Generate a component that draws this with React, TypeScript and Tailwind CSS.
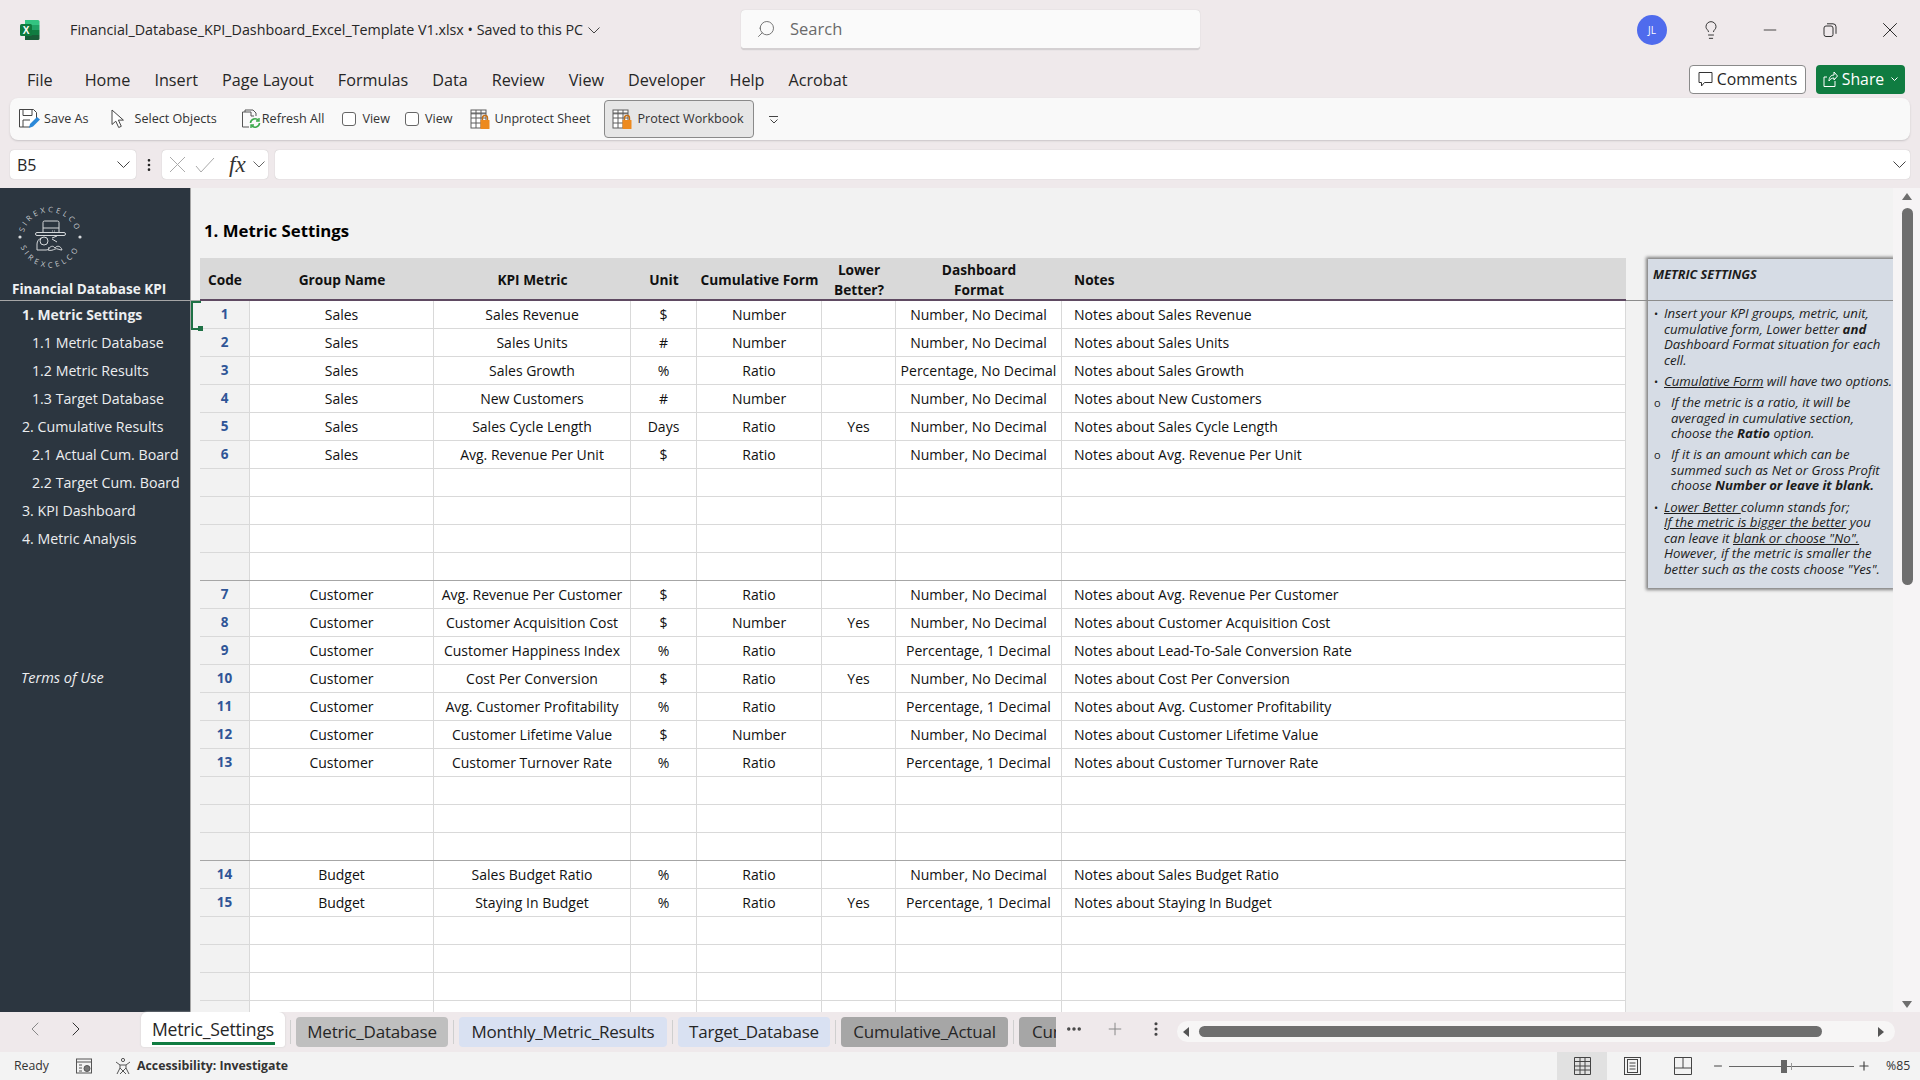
import { ChevronLeft, ChevronRight, Lightbulb, Minus, MoreHorizontal, MoreVertical, Plus, Search, X } from "lucide-react";
import type { ReactNode } from "react";

type Row = { code?: number; group?: string; metric?: string; unit?: string; form?: string; lower?: string; format?: string; notes?: string; thick?: boolean };

const NUM = "Number, No Decimal";
const PCT0 = "Percentage, No Decimal";
const PCT1 = "Percentage, 1 Decimal";

const rows: Row[] = [
	{ code: 1, group: "Sales", metric: "Sales Revenue", unit: "$", form: "Number", format: NUM, notes: "Notes about Sales Revenue" },
	{ code: 2, group: "Sales", metric: "Sales Units", unit: "#", form: "Number", format: NUM, notes: "Notes about Sales Units" },
	{ code: 3, group: "Sales", metric: "Sales Growth", unit: "%", form: "Ratio", format: PCT0, notes: "Notes about Sales Growth" },
	{ code: 4, group: "Sales", metric: "New Customers", unit: "#", form: "Number", format: NUM, notes: "Notes about New Customers" },
	{ code: 5, group: "Sales", metric: "Sales Cycle Length", unit: "Days", form: "Ratio", lower: "Yes", format: NUM, notes: "Notes about Sales Cycle Length" },
	{ code: 6, group: "Sales", metric: "Avg. Revenue Per Unit", unit: "$", form: "Ratio", format: NUM, notes: "Notes about Avg. Revenue Per Unit" },
	{},
	{},
	{},
	{ thick: true },
	{ code: 7, group: "Customer", metric: "Avg. Revenue Per Customer", unit: "$", form: "Ratio", format: NUM, notes: "Notes about Avg. Revenue Per Customer" },
	{ code: 8, group: "Customer", metric: "Customer Acquisition Cost", unit: "$", form: "Number", lower: "Yes", format: NUM, notes: "Notes about Customer Acquisition Cost" },
	{ code: 9, group: "Customer", metric: "Customer Happiness Index", unit: "%", form: "Ratio", format: PCT1, notes: "Notes about Lead-To-Sale Conversion Rate" },
	{ code: 10, group: "Customer", metric: "Cost Per Conversion", unit: "$", form: "Ratio", lower: "Yes", format: NUM, notes: "Notes about Cost Per Conversion" },
	{ code: 11, group: "Customer", metric: "Avg. Customer Profitability", unit: "%", form: "Ratio", format: PCT1, notes: "Notes about Avg. Customer Profitability" },
	{ code: 12, group: "Customer", metric: "Customer Lifetime Value", unit: "$", form: "Number", format: NUM, notes: "Notes about Customer Lifetime Value" },
	{ code: 13, group: "Customer", metric: "Customer Turnover Rate", unit: "%", form: "Ratio", format: PCT1, notes: "Notes about Customer Turnover Rate" },
	{},
	{},
	{ thick: true },
	{ code: 14, group: "Budget", metric: "Sales Budget Ratio", unit: "%", form: "Ratio", format: NUM, notes: "Notes about Sales Budget Ratio" },
	{ code: 15, group: "Budget", metric: "Staying In Budget", unit: "%", form: "Ratio", lower: "Yes", format: PCT1, notes: "Notes about Staying In Budget" },
	{},
	{},
	{},
	{},
	{},
];

const navItems = [
	{ label: "1. Metric Settings", bold: true },
	{ label: "1.1 Metric Database", sub: true },
	{ label: "1.2 Metric Results", sub: true },
	{ label: "1.3 Target Database", sub: true },
	{ label: "2. Cumulative Results" },
	{ label: "2.1 Actual Cum. Board", sub: true },
	{ label: "2.2 Target Cum. Board", sub: true },
	{ label: "3. KPI Dashboard" },
	{ label: "4. Metric Analysis" },
];

function Chevron({ width = 13, color = "#444", className }: { width?: number; color?: string; className?: string }) {
	return (
		<svg className={className} width={width} height={width / 2 + 1} viewBox={`0 0 ${width} ${width / 2 + 1}`} fill="none" stroke={color}>
			<path d={`M.5 .5L${width / 2} ${width / 2}L${width - 0.5} .5`} />
		</svg>
	);
}

function ExcelLogo() {
	return (
		<svg width="20" height="22" viewBox="0 0 20 22">
			<path d="M5 1h13a1.5 1.5 0 0 1 1.5 1.5V6H5z" fill="#33c481" />
			<rect x="5" y="6" width="14.5" height="5" fill="#21a366" />
			<rect x="5" y="11" width="14.5" height="5" fill="#107c41" />
			<path d="M5 16h14.5v3.5A1.5 1.5 0 0 1 18 21H5z" fill="#185c37" />
			<rect x="0" y="5" width="12" height="12" rx="1.5" fill="#0f7a3e" />
			<text x="6" y="14.5" textAnchor="middle" fontSize="10" fontWeight="700" fill="#fff" fontFamily="Liberation Sans">X</text>
		</svg>
	);
}

function SiteLogo() {
	return (
		<svg width="70" height="70" viewBox="0 0 70 70" fill="none" stroke="#d5d8da" strokeWidth="1">
			<defs>
				<path id="arc-top" d="M9 30 A27 27 0 0 1 61 30" />
				<path id="arc-bottom" d="M4.5 40 A31 31 0 0 0 65.5 40" />
			</defs>
			<text fontSize="7.5" fill="#c9cdd0" stroke="none" letterSpacing="2.8" textAnchor="middle" fontFamily="Open Sans">
				<textPath href="#arc-top" startOffset="50%">SIREXCELCO</textPath>
			</text>
			<text fontSize="7.5" fill="#c9cdd0" stroke="none" letterSpacing="3.3" textAnchor="middle" fontFamily="Open Sans">
				<textPath href="#arc-bottom" startOffset="50%">SIREXCELCO</textPath>
			</text>
			<circle cx="5" cy="35" r="1.6" fill="#d5d8da" stroke="none" />
			<circle cx="65" cy="35" r="1.6" fill="#d5d8da" stroke="none" />
			<path d="M28 31V20.5a1.5 1.5 0 0 1 1.5-1.5h13a1.5 1.5 0 0 1 1.5 1.5V31" />
			<path d="M28 26h16" />
			<rect x="20.5" y="30.5" width="30" height="3" rx="1.5" />
			<path d="M37 29h4" strokeWidth="0.8" strokeDasharray="1 1" />
			<path d="M22 48v-6c0-3 2-5 4-6M29 35a4 4 0 1 1 0 8 4 4 0 0 1 0-8zM22 48h9c2 0 3-1 3-3" />
			<path d="M33 48c2-4 5-5 7-2 2-3 6-2 7 2-3 0-5-2-7-1-2 1-4 2-7 1zM37 36l5-2M37 37l5 3" />
		</svg>
	);
}

function TableLockIcon() {
	return (
		<svg width="21" height="21" viewBox="0 0 21 21" fill="none">
			<rect x="1" y="1" width="15" height="18" fill="#fff" stroke="#5c5c5c" />
			<path d="M1 4h15M1 4.8h15M1 9h15M1 14h15M6 1v18M11 1v18" stroke="#5c5c5c" />
			<rect x="10.5" y="11" width="9" height="9" rx="0.5" fill="#ed8a1f" />
			<path d="M12.5 11V9a2.5 2.5 0 0 1 5 0v2" stroke="#c66e12" strokeWidth="1.4" />
		</svg>
	);
}

function SaveAsIcon() {
	return (
		<svg width="22" height="22" viewBox="0 0 22 22" fill="none">
			<path d="M1.5 1.5h14l3 3v7l-7 7.5h-10z" fill="#fff" stroke="#444" />
			<path d="M5 1.5v6h9v-6M5 19v-7h7" stroke="#444" />
			<path d="M11 20l1-4 7-7 3 2.5-7 7z" fill="#2b88d8" />
		</svg>
	);
}

function CursorIcon() {
	return (
		<svg width="16" height="20" viewBox="0 0 16 20" fill="#fff" stroke="#444">
			<path d="M2 1v14.5l3.8-3.3 2.9 6.3 2.6-1.2-2.9-6.2h5z" />
		</svg>
	);
}

function RefreshAllIcon() {
	return (
		<svg width="20" height="20" viewBox="0 0 20 20" fill="none">
			<path d="M4 3V1h8l3 3v3M4 3H1.5v15H8" stroke="#555" />
			<path d="M4 3h6v4h3" stroke="#555" />
			<path d="M9.5 14a4.5 4.5 0 0 1 8-2.5M18.5 14a4.5 4.5 0 0 1-8 2.5" stroke="#3aa94a" strokeWidth="1.6" />
			<path d="M18 9v3h-3M10 19v-3h3" stroke="#3aa94a" strokeWidth="1.4" />
		</svg>
	);
}

function ToolbarItem({ icon, label, className }: { icon: ReactNode; label: string; className?: string }) {
	return (
		<div className={`flex items-center ${className ?? "gap-[4px]"}`}>
			{icon}
			<span className="pt-px">{label}</span>
		</div>
	);
}

function Cell({ children, className }: { children?: ReactNode; className?: string }) {
	return <div className={`flex items-center justify-center border-r border-[#d9d9d9] whitespace-nowrap ${className ?? ""}`}>{children}</div>;
}

const gridCols = "grid grid-cols-[50px_184px_197px_66px_125px_74px_166px_564px]";

function TableRow({ row }: { row: Row }) {
	return (
		<div className={`${gridCols} h-[28px] shrink-0 bg-white border-b ${row.thick ? "border-[#a6a6a6]" : "border-[#d9d9d9]"}`}>
			<Cell className="bg-[#f2f2f2] font-bold text-[#2f5597] text-[13.5px]">{row.code}</Cell>
			<Cell>{row.group}</Cell>
			<Cell>{row.metric}</Cell>
			<Cell>{row.unit}</Cell>
			<Cell>{row.form}</Cell>
			<Cell>{row.lower}</Cell>
			<Cell>{row.format}</Cell>
			<Cell className="justify-start pl-[12px]">{row.notes}</Cell>
		</div>
	);
}

function Sidebar() {
	return (
		<div className="w-[191px] shrink-0 bg-[#2c3640] border-r border-[#a6a6a6] text-white flex flex-col">
			<div className="h-[113px] shrink-0 flex flex-col border-b border-[#a6a6a6]">
				<div className="ml-[15px] mt-[14px]">
					<SiteLogo />
				</div>
				<div className="ml-[12px] mt-[7px] text-[13.6px] font-bold text-[#eef0f2] leading-[20px]">Financial Database KPI</div>
			</div>
			{navItems.map((item) => (
				<div
					key={item.label}
					className={`h-[28px] flex items-center text-[#eceef0] ${item.sub ? "pl-[32px]" : "pl-[22px]"} ${item.bold ? "font-bold text-[13.9px]" : "text-[14.2px]"}`}
				>
					{item.label}
				</div>
			))}
			<div className="mt-[111px] h-[28px] flex items-center pl-[21px] text-[14.5px] italic text-[#eceef0]">Terms of Use</div>
		</div>
	);
}

function NotePanel() {
	return (
		<div className="ml-[22px] mt-[71px] w-[245px] h-[329px] shrink-0 bg-[#d6dce5] shadow-[0_0_3px_2px_#808080] text-[#1c1c1c] italic text-[13.2px] leading-[15.6px] whitespace-nowrap">
			<div className="h-[41px] pl-[5px] pt-[8px] font-bold text-[12.7px]">METRIC SETTINGS</div>
			<div className="pt-[6px] flex flex-col gap-[5.5px]">
				<div className="flex pl-[6px]">
					<span className="w-[10px] not-italic text-[11px]">•</span>
					<span>Insert your KPI groups, metric, unit,<br />cumulative form, Lower better <b>and</b><br />Dashboard Format situation for each<br />cell.</span>
				</div>
				<div className="flex pl-[6px]">
					<span className="w-[10px] not-italic text-[11px]">•</span>
					<span><u>Cumulative Form</u> will have two options.</span>
				</div>
				<div className="flex pl-[6px]">
					<span className="w-[17px] not-italic text-[11px]">o</span>
					<span>If the metric is a ratio, it will be<br />averaged in cumulative section,<br />choose the <b>Ratio</b> option.</span>
				</div>
				<div className="flex pl-[6px]">
					<span className="w-[17px] not-italic text-[11px]">o</span>
					<span>If it is an amount which can be<br />summed such as Net or Gross Profit<br />choose <b>Number or leave it blank.</b></span>
				</div>
				<div className="flex pl-[6px]">
					<span className="w-[10px] not-italic text-[11px]">•</span>
					<span>
						<u>Lower Better </u>column stands for;<br />
						<u>If the metric is bigger the better</u> you<br />
						can leave it <u>blank or choose "No".</u><br />
						However, if the metric is smaller the<br />
						better such as the costs choose "Yes".
					</span>
				</div>
			</div>
		</div>
	);
}

function Sheet() {
	return (
		<div className="h-[824px] shrink-0 flex text-[14px] text-[#111]">
			<Sidebar />
			<div className="w-[9px] shrink-0 bg-[#f2f2f2] flex flex-col relative z-10">
				<div className="h-[113px] border-b border-[#a6a6a6]" />
				<div className="w-[10px] h-[29px] border-y-2 border-l-2 border-[#1e7145] relative">
					<div className="absolute right-[-2px] bottom-[-3px] w-[5px] h-[5px] bg-[#1e7145]" />
				</div>
			</div>
			<div className="w-[1693px] shrink-0 bg-[#f2f2f2] overflow-hidden flex relative">
				<div className="w-[1426px] shrink-0 flex flex-col">
					<div className="h-[70px] shrink-0 flex items-end pl-[4px] pb-[15px] text-[16.8px] font-bold text-black leading-[24px]">1. Metric Settings</div>
					<div className={`${gridCols} h-[43px] shrink-0 pt-[2px] bg-[#d9d9d9] border-b-2 border-[#5f4a62] font-bold text-[13.7px] leading-[20px]`}>
						<div className="flex items-center justify-center">Code</div>
						<div className="flex items-center justify-center">Group Name</div>
						<div className="flex items-center justify-center">KPI Metric</div>
						<div className="flex items-center justify-center">Unit</div>
						<div className="flex items-center justify-center">Cumulative Form</div>
						<div className="flex items-center justify-center text-center">Lower<br />Better?</div>
						<div className="flex items-center justify-center text-center">Dashboard<br />Format</div>
						<div className="flex items-center pl-[12px]">Notes</div>
					</div>
					{rows.map((row, i) => (
						<TableRow key={i} row={row} />
					))}
				</div>
				<NotePanel />
				<div className="absolute left-[1426px] right-0 top-[112px] h-px bg-[#8c8c8c]" />
			</div>
			<div className="flex-1 bg-[#f6f4f5] flex flex-col items-center pt-[1px] relative">
				<div className="w-0 h-0 mt-[4px] border-x-[5px] border-x-transparent border-b-[7px] border-b-[#6e6e6e]" />
				<div className="w-[11px] h-[377px] mt-[8px] ml-[2px] rounded-full bg-[#6e6e6e]" />
				<div className="flex-1" />
				<div className="w-0 h-0 mb-[4px] border-x-[5px] border-x-transparent border-t-[7px] border-t-[#6e6e6e]" />
			</div>
		</div>
	);
}

function SheetTab({ label, color, className }: { label: string; color: string; className?: string }) {
	return <div className={`h-[30px] mt-[5px] rounded-[4px] flex items-center justify-center whitespace-nowrap overflow-hidden ${color} ${className ?? ""}`}>{label}</div>;
}

function TabSeparator() {
	return <div className="w-px h-[24px] mt-[8px] mx-[5px] bg-[#cfcfcf]" />;
}

function TabStrip() {
	return (
		<div className="h-[40px] shrink-0 bg-[#efe9eb] flex text-[17px] text-[#262626] tracking-[-0.2px]">
			<div className="w-[141px] shrink-0 flex items-center pl-[23px] pb-[6px] gap-[17px] text-[#888]">
				<ChevronLeft size={24} strokeWidth={1} />
				<ChevronRight size={24} strokeWidth={1} className="text-[#333]" />
			</div>
			<div className="w-[144px] h-[35px] shrink-0 rounded-t-[6px] rounded-b-[3px] bg-white flex flex-col items-center justify-end pb-[2px] shadow-[0_0_2px_#ccc] text-[17.6px]">
				<div className="leading-[22px] mb-[1px]">Metric_Settings</div>
				<div className="w-[123px] h-[3px] mt-[1px] bg-[#107c41]" />
			</div>
			<TabSeparator />
			<SheetTab label="Metric_Database" color="bg-[#bfbfbf]" className="w-[152px]" />
			<TabSeparator />
			<SheetTab label="Monthly_Metric_Results" color="bg-[#d9e1f2]" className="w-[208px]" />
			<TabSeparator />
			<SheetTab label="Target_Database" color="bg-[#d9e1f2]" className="w-[152px]" />
			<TabSeparator />
			<SheetTab label="Cumulative_Actual" color="bg-[#a6a6a6]" className="w-[167px]" />
			<TabSeparator />
			<SheetTab label="Cumulative_Target" color="bg-[#a6a6a6]" className="w-[37px] rounded-r-none justify-start pl-[13px]" />
			<div className="flex items-center pb-[6px] pl-[9px] text-[#444]">
				<MoreHorizontal size={18} strokeWidth={2.6} />
				<Plus size={20} strokeWidth={1.2} className="ml-[22px] text-[#888]" />
				<MoreVertical size={18} strokeWidth={2.2} className="ml-[22px]" />
			</div>
			<div className="ml-[12px] w-[718px] h-[21px] mt-[9px] rounded-full bg-[#f7f6f6] flex items-center px-[6px]">
				<div className="w-0 h-0 border-y-[5px] border-y-transparent border-r-[6px] border-r-[#555]" />
				<div className="ml-[10px] w-[623px] h-[11px] rounded-full bg-[#6e6e6e]" />
				<div className="flex-1" />
				<div className="w-0 h-0 mr-[5px] border-y-[5px] border-y-transparent border-l-[6px] border-l-[#555]" />
			</div>
		</div>
	);
}

function StatusBar() {
	return (
		<div className="h-[28px] shrink-0 bg-[#f3f3f3] flex items-center text-[12.3px] text-[#333]">
			<span className="ml-[14px]">Ready</span>
			<svg className="ml-[26px]" width="18" height="18" viewBox="0 0 18 18" fill="none" stroke="#555">
				<rect x="1.5" y="2" width="15" height="14" />
				<path d="M1.5 5h15M4 8h3M4 11h3M4 14h3" />
				<circle cx="12" cy="11.5" r="3" fill="#777" />
			</svg>
			<svg className="ml-[21px]" width="18" height="18" viewBox="0 0 18 18" fill="none" stroke="#555">
				<circle cx="9" cy="3" r="1.6" />
				<path d="M2 5l4 3v3l-3 6M16 5l-4 3v3l3 6M6 8h6M6 11l6 6M12 11l-6 6" />
			</svg>
			<span className="ml-[5px] font-bold text-[#333]">Accessibility: Investigate</span>
			<div className="ml-auto w-[50px] h-[28px] bg-[#e1e1e1] flex items-center justify-center">
				<svg width="17" height="18" viewBox="0 0 17 18" fill="none" stroke="#444">
					<path d="M.5.5h16v17H.5zM.5 4.5h16M.5 9h16M.5 13h16M6 .5v17M11 .5v17" />
				</svg>
			</div>
			<svg className="ml-[17px]" width="17" height="18" viewBox="0 0 17 18" fill="none" stroke="#444">
				<rect x="0.5" y="0.5" width="16" height="17" />
				<rect x="3.5" y="2.5" width="10" height="13" />
				<path d="M5.5 6h6M5.5 9h6M5.5 12h6" />
			</svg>
			<svg className="ml-[33px]" width="18" height="18" viewBox="0 0 18 18" fill="none" stroke="#444">
				<path d="M.5.5h17v17H.5zM9 .5V11H.5M9 11h8.5" />
			</svg>
			<Minus size={12} className="ml-[20px] text-[#444]" />
			<div className="ml-[5px] w-[125px] h-px bg-[#666] relative">
				<div className="absolute left-[52px] top-[-6px] w-[6px] h-[13px] bg-[#666]" />
				<div className="absolute left-[62px] top-[-3px] w-px h-[7px] bg-[#999]" />
			</div>
			<Plus size={14} className="ml-[3px] text-[#444]" />
			<span className="ml-[15px] w-[34px]">%85</span>
		</div>
	);
}

export default function App() {
	return (
		<div className="w-[1920px] h-[1080px] overflow-hidden flex flex-col bg-[#efe9eb] font-['Open_Sans',sans-serif] text-[#262626]">
			{/* title bar */}
			<div className="h-[60px] shrink-0 flex items-center">
				<div className="w-[741px] shrink-0 flex items-center pl-[20px] text-[14.3px]">
					<ExcelLogo />
					<span className="ml-[30px] whitespace-nowrap">Financial_Database_KPI_Dashboard_Excel_Template V1.xlsx • Saved to this PC</span>
					<Chevron width={12} className="ml-[5px]" />
				</div>
				<div className="w-[459px] h-[40px] shrink-0 rounded-[4px] bg-[#fafafa] border-b-2 border-[#d4d0d2] shadow-[0_0_1px_#bbb] flex items-center pl-[15px] gap-[14px] text-[16.5px] text-[#6a6a6a]">
					<Search size={20} strokeWidth={1.1} className="-scale-x-100" />
					<span className="pt-[1px]">Search</span>
				</div>
				<div className="flex-1 flex items-center justify-end">
					<div className="w-[30px] h-[30px] rounded-full bg-[#4f6bed] text-white text-[10px] flex items-center justify-center mr-[34px]">JL</div>
					<Lightbulb size={20} strokeWidth={1.1} className="mr-[39px]" />
					<Minus size={20} strokeWidth={1} className="mr-[43px]" />
					<svg className="mr-[40px]" width="14" height="14" viewBox="0 0 14 14" fill="none" stroke="#333">
						<rect x="1" y="3" width="9" height="10.5" rx="2" />
						<path d="M4 .8h6a3 3 0 0 1 3 3v7" />
					</svg>
					<X size={26} strokeWidth={0.9} className="mr-[17px]" />
				</div>
			</div>

			{/* menu row */}
			<div className="h-[38px] shrink-0 flex items-center text-[16.2px] pl-[27px] pr-[15px]">
				<span className="mr-[32px] pt-[2px]">File</span>
				<div className="flex gap-[24px] pt-[2px]">
					{["Home", "Insert", "Page Layout", "Formulas", "Data", "Review", "View", "Developer", "Help", "Acrobat"].map((m) => (
						<span key={m}>{m}</span>
					))}
				</div>
				<div className="ml-auto flex gap-[10px] h-[29px]">
					<div className="w-[117px] rounded-[4px] bg-white border border-[#8a8a8a] flex items-center justify-center gap-[4px] text-[15.8px]">
						<svg width="15" height="17" viewBox="0 0 15 17" fill="none" stroke="#333">
							<path d="M1 1.5h13v10H6.5L3.5 15v-3.5H1z" />
						</svg>
						<span className="pt-[1px]">Comments</span>
					</div>
					<div className="w-[89px] rounded-[4px] bg-[#107c41] text-white flex items-center justify-center gap-[4px] text-[15.8px]">
						<svg width="15" height="18" viewBox="0 0 15 18" fill="none" stroke="#fff">
							<path d="M4 7H1v9.5h11V11M6 11c0-4 2-6 5-6V2l3.5 4L11 10V8c-2 0-4 1-5 3z" />
						</svg>
						<span className="pt-[1px]">Share</span>
						<Chevron width={7} color="#fff" className="ml-[3px]" />
					</div>
				</div>
			</div>

			{/* quick toolbar */}
			<div className="h-[42px] shrink-0 mx-[10px] rounded-[8px] bg-[#f9f9f9] shadow-[0_1px_2px_#c8c4c6] flex items-center pl-[8px] text-[12.6px] text-[#333]">
				<ToolbarItem icon={<SaveAsIcon />} label="Save As" />
				<ToolbarItem icon={<CursorIcon />} label="Select Objects" className="ml-[21px] gap-[9px]" />
				<ToolbarItem icon={<RefreshAllIcon />} label="Refresh All" className="ml-[24px] gap-[1px]" />
				<div className="ml-[18px] flex items-center gap-[6px]">
					<div className="w-[14px] h-[14px] rounded-[3px] border border-[#666] bg-white" />
					<span className="pt-px">View</span>
				</div>
				<div className="ml-[15px] flex items-center gap-[6px]">
					<div className="w-[14px] h-[14px] rounded-[3px] border border-[#666] bg-white" />
					<span className="pt-px">View</span>
				</div>
				<ToolbarItem icon={<TableLockIcon />} label="Unprotect Sheet" className="ml-[17px] gap-[4px]" />
				<div className="ml-[14px] w-[150px] h-[38px] rounded-[4px] bg-[#e6e6e6] border border-[#8a8a8a] flex items-center pl-[7px] gap-[4px]">
					<TableLockIcon />
					<span className="pt-px">Protect Workbook</span>
				</div>
				<div className="ml-[15px] flex flex-col items-center gap-[2px] pt-[2px]">
					<div className="w-[9px] h-px bg-[#444]" />
					<Chevron width={8} />
				</div>
			</div>

			{/* formula bar */}
			<div className="h-[29px] shrink-0 mt-[10px] mb-[9px] mx-[10px] flex items-stretch text-[16px]">
				<div className="w-[126px] rounded-[4px] bg-white shadow-[0_0_1px_#aaa] flex items-center justify-between pl-[7px] pr-[6px]">
					B5
					<Chevron width={13} />
				</div>
				<div className="w-[26px] flex items-center justify-center">
					<MoreVertical size={16} strokeWidth={2} />
				</div>
				<div className="w-[106px] rounded-[4px] bg-white shadow-[0_0_1px_#aaa] flex items-center pl-[7px]">
					<svg width="17" height="17" viewBox="0 0 17 17" fill="none" stroke="#aaa">
						<path d="M1 1l15 15M16 1L1 16" />
					</svg>
					<svg className="ml-[9px]" width="20" height="16" viewBox="0 0 20 16" fill="none" stroke="#aaa">
						<path d="M1 9l5 6L19 1" />
					</svg>
					<span className="ml-[14px] font-['Liberation_Serif',serif] italic text-[23px] text-[#333] leading-none">fx</span>
					<Chevron width={12} color="#666" className="ml-[7px]" />
				</div>
				<div className="ml-[7px] flex-1 rounded-[4px] bg-white shadow-[0_0_1px_#aaa] flex items-center justify-end pr-[4px]">
					<Chevron width={13} />
				</div>
			</div>

			<Sheet />
			<TabStrip />
			<StatusBar />
		</div>
	);
}
